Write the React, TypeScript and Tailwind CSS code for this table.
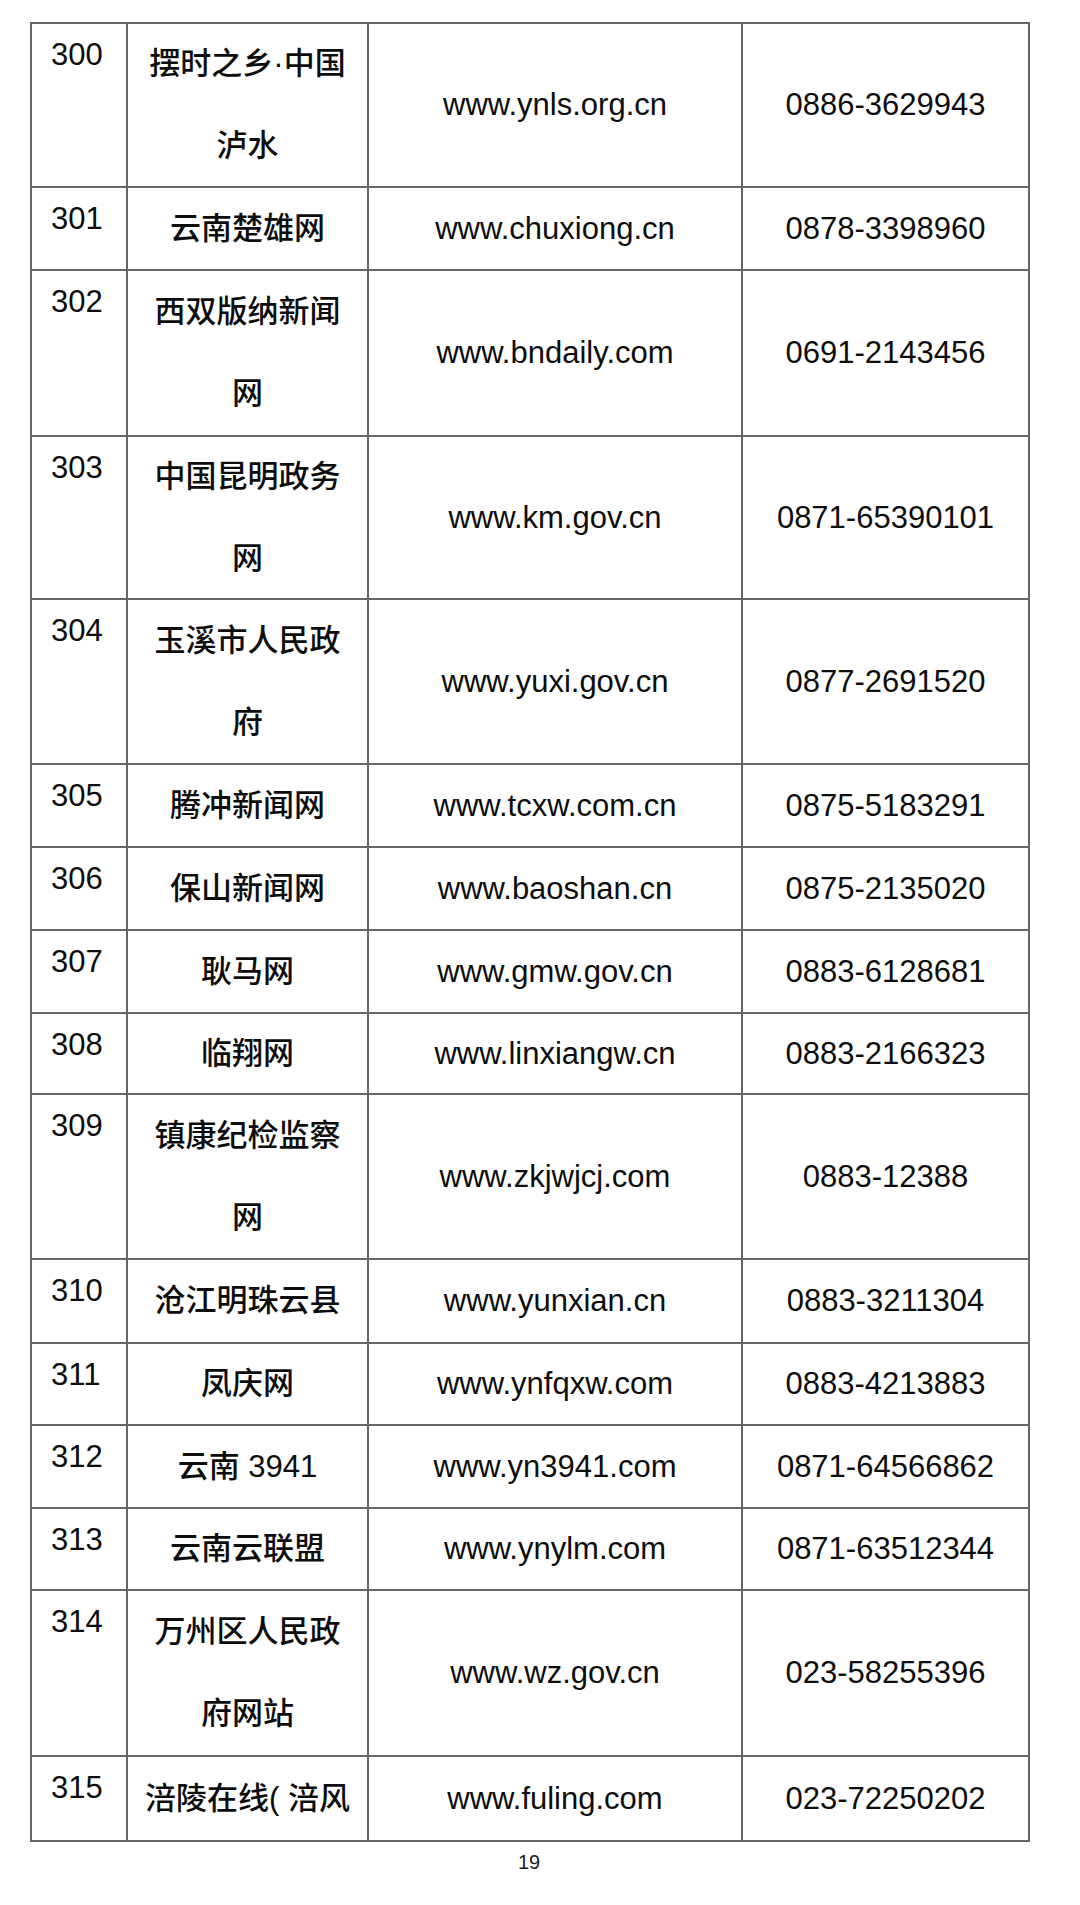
import React from "react";

type Row = { no: string; name: string[]; url: string; tel: string; h: string };

const rows: Row[] = [
  { no: "300", name: ["摆时之乡·中国", "泸水"], url: "www.ynls.org.cn", tel: "0886-3629943", h: "h-[164px]" },
  { no: "301", name: ["云南楚雄网"], url: "www.chuxiong.cn", tel: "0878-3398960", h: "h-[83px]" },
  { no: "302", name: ["西双版纳新闻", "网"], url: "www.bndaily.com", tel: "0691-2143456", h: "h-[166px]" },
  { no: "303", name: ["中国昆明政务", "网"], url: "www.km.gov.cn", tel: "0871-65390101", h: "h-[163px]" },
  { no: "304", name: ["玉溪市人民政", "府"], url: "www.yuxi.gov.cn", tel: "0877-2691520", h: "h-[165px]" },
  { no: "305", name: ["腾冲新闻网"], url: "www.tcxw.com.cn", tel: "0875-5183291", h: "h-[83px]" },
  { no: "306", name: ["保山新闻网"], url: "www.baoshan.cn", tel: "0875-2135020", h: "h-[83px]" },
  { no: "307", name: ["耿马网"], url: "www.gmw.gov.cn", tel: "0883-6128681", h: "h-[83px]" },
  { no: "308", name: ["临翔网"], url: "www.linxiangw.cn", tel: "0883-2166323", h: "h-[81px]" },
  { no: "309", name: ["镇康纪检监察", "网"], url: "www.zkjwjcj.com", tel: "0883-12388", h: "h-[165px]" },
  { no: "310", name: ["沧江明珠云县"], url: "www.yunxian.cn", tel: "0883-3211304", h: "h-[84px]" },
  { no: "311", name: ["凤庆网"], url: "www.ynfqxw.com", tel: "0883-4213883", h: "h-[82px]" },
  { no: "312", name: ["云南 3941"], url: "www.yn3941.com", tel: "0871-64566862", h: "h-[83px]" },
  { no: "313", name: ["云南云联盟"], url: "www.ynylm.com", tel: "0871-63512344", h: "h-[82px]" },
  { no: "314", name: ["万州区人民政", "府网站"], url: "www.wz.gov.cn", tel: "023-58255396", h: "h-[166px]" },
  { no: "315", name: ["涪陵在线( 涪风"], url: "www.fuling.com", tel: "023-72250202", h: "h-[85px]" },
];

const latin = "font-['Liberation_Sans','Noto_Sans_CJK_SC',sans-serif]";

export default function App() {
  return (
    <div className="w-[1080px] h-[1905px] bg-white text-[#0d0d0d] overflow-hidden">
      <div className="ml-[30px] mt-[22px] w-[1000px] border-t-2 border-l-2 border-[#666666]">
        {rows.map((r) => (
          <div key={r.no} className={`flex ${r.h} border-b-2 border-[#666666]`}>
            <div className={`w-[96px] shrink-0 border-r-2 border-[#666666] pl-[19px] pt-[13px] text-[31px] leading-[36px] ${latin}`}>
              {r.no}
            </div>
            <div className={`w-[241px] shrink-0 border-r-2 border-[#666666] flex flex-col items-center justify-center text-[31px] leading-[82px] font-medium whitespace-nowrap ${latin}`}>
              {r.name.map((n, i) => (
                <div key={i}>{n}</div>
              ))}
            </div>
            <div className={`w-[374px] shrink-0 border-r-2 border-[#666666] flex items-center justify-center text-[31px] leading-[36px] ${latin}`}>
              {r.url}
            </div>
            <div className={`w-[287px] shrink-0 border-r-2 border-[#666666] flex items-center justify-center text-[31px] leading-[36px] ${latin}`}>
              {r.tel}
            </div>
          </div>
        ))}
      </div>
      <div className={`w-[1058px] mt-[8px] text-center text-[20px] leading-[24px] text-[#1a1a1a] ${latin}`}>19</div>
    </div>
  );
}
